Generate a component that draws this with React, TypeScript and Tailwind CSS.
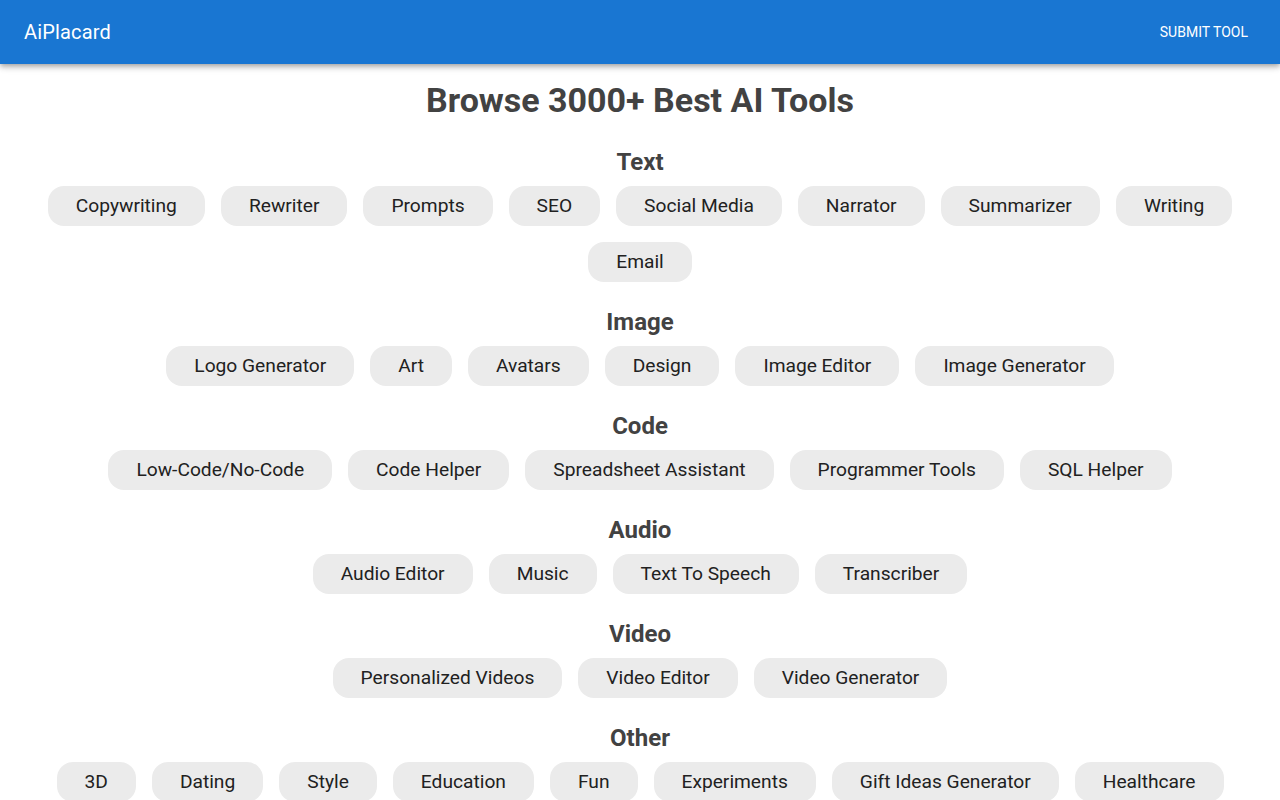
const sections: { title: string; items: string[] }[] = [
  {
    title: "Text",
    items: [
      "Copywriting",
      "Rewriter",
      "Prompts",
      "SEO",
      "Social Media",
      "Narrator",
      "Summarizer",
      "Writing",
      "Email",
    ],
  },
  {
    title: "Image",
    items: ["Logo Generator", "Art", "Avatars", "Design", "Image Editor", "Image Generator"],
  },
  {
    title: "Code",
    items: [
      "Low-Code/No-Code",
      "Code Helper",
      "Spreadsheet Assistant",
      "Programmer Tools",
      "SQL Helper",
    ],
  },
  {
    title: "Audio",
    items: ["Audio Editor", "Music", "Text To Speech", "Transcriber"],
  },
  {
    title: "Video",
    items: ["Personalized Videos", "Video Editor", "Video Generator"],
  },
  {
    title: "Other",
    items: [
      "3D",
      "Dating",
      "Style",
      "Education",
      "Fun",
      "Experiments",
      "Gift Ideas Generator",
      "Healthcare",
    ],
  },
];

export default function App() {
  return (
    <div className="min-h-screen bg-white font-['Roboto',sans-serif]">
      {/* App bar */}
      <header className="h-16 bg-[#1976d2] flex items-center justify-between px-6 shadow-[0_2px_4px_-1px_rgba(0,0,0,0.2),0_4px_5px_0_rgba(0,0,0,0.14),0_1px_10px_0_rgba(0,0,0,0.12)]">
        <h6 className="text-white text-[20px] font-normal tracking-[0.15px]">AiPlacard</h6>
        <button className="text-white text-[14px] font-normal uppercase px-2 py-1.5">
          Submit Tool
        </button>
      </header>

      <main className="flex flex-col items-center px-6 pt-4">
        <h1 className="h-10 leading-10 text-[34px] font-bold text-[#424242] mb-[2px]">
          Browse 3000+ Best AI Tools
        </h1>

        {sections.map((section) => (
          <section key={section.title} className="w-full flex flex-col items-center mt-6">
            <h2 className="h-8 leading-8 text-[24px] font-bold text-[#424242]">{section.title}</h2>
            <div className="mt-2 flex flex-wrap justify-center gap-4">
              {section.items.map((item) => (
                <span
                  key={item}
                  className="h-10 px-7 rounded-2xl bg-[#ebebeb] text-[#212121] text-[19.2px] flex items-center whitespace-nowrap"
                >
                  {item}
                </span>
              ))}
            </div>
          </section>
        ))}
      </main>
    </div>
  );
}
